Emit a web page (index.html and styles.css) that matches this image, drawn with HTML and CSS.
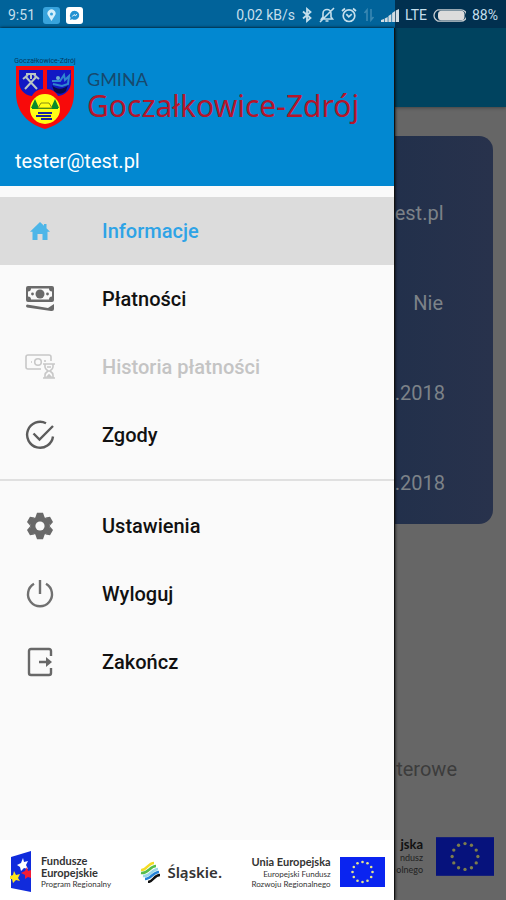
FILE: index.html
```html
<!DOCTYPE html>
<html lang="pl">
<head>
    <meta charset="UTF-8">
    <meta name="viewport" content="width=device-width, initial-scale=1.0">
    <title>Gmina Goczałkowice-Zdrój</title>
    <link rel="stylesheet" href="styles.css">
</head>
<body>
    <svg class="defs" width="0" height="0" aria-hidden="true">
        <symbol id="eu-flag" viewBox="0 0 45 30">
            <rect width="45" height="30" fill="currentColor"/>
            <g class="stars">
                <circle cx="22.5" cy="5" r="1.3"/><circle cx="27.5" cy="6.3" r="1.3"/>
                <circle cx="31.2" cy="10" r="1.3"/><circle cx="32.5" cy="15" r="1.3"/>
                <circle cx="31.2" cy="20" r="1.3"/><circle cx="27.5" cy="23.7" r="1.3"/>
                <circle cx="22.5" cy="25" r="1.3"/><circle cx="17.5" cy="23.7" r="1.3"/>
                <circle cx="13.8" cy="20" r="1.3"/><circle cx="12.5" cy="15" r="1.3"/>
                <circle cx="13.8" cy="10" r="1.3"/><circle cx="17.5" cy="6.3" r="1.3"/>
            </g>
        </symbol>
    </svg>

    <header class="statusbar">
        <div class="status-group">
            <span class="clock">9:51</span>
            <svg width="17" height="17" viewBox="0 0 17 17">
                <rect width="17" height="17" rx="3" fill="#38a3dc"/>
                <path d="M8.5 14 5.4 9A4 4 0 1 1 11.6 9Z" fill="#d5effb"/>
                <circle cx="8.5" cy="7" r="1.5" fill="#38a3dc"/>
            </svg>
            <svg width="17" height="17" viewBox="0 0 17 17">
                <rect width="17" height="17" rx="3" fill="#fff"/>
                <path d="M8.5 3.8a4.7 4.5 0 1 1-2.3 8.4L4 13l.6-2.2A4.6 4.6 0 0 1 8.5 3.8Z" fill="#2492d2"/>
                <path d="M6.3 9.5 8 7.6l1.2 1L11 7.4" fill="none" stroke="#fff"/>
            </svg>
        </div>
        <div class="status-group">
            <span>0,02 kB/s</span>
            <svg width="12" height="16" viewBox="0 0 12 16" fill="none" stroke="#c5dfec" stroke-width="1.8">
                <path d="M2 4.5 9.5 11 6 14V2l3.5 3L2 11.5"/>
            </svg>
            <svg width="16" height="16" viewBox="0 0 16 16" fill="none" stroke="#c5dfec" stroke-width="1.6">
                <path d="M2.5 12h11L12 10V6.5a4 4 0 0 0-8 0V10ZM6.5 14h3M1 15 15 1"/>
            </svg>
            <svg width="16" height="16" viewBox="0 0 16 16" fill="none" stroke="#c5dfec" stroke-width="1.7">
                <circle cx="8" cy="8.7" r="5.8"/>
                <path d="m5.3 7.2 2.5 2.6 3-2.6M1 4l3-2.5M15 4l-3-2.5"/>
            </svg>
            <svg width="12" height="14" viewBox="0 0 12 14" fill="none" stroke="#3a88b3" stroke-width="1.6">
                <path d="M4 13V2L1.500 5M8 1v11l2.500-3"/>
            </svg>
            <svg width="18" height="13" viewBox="0 0 18 13" fill="#d3dde3">
                <path d="M0 13v-2l3-1v3ZM3.700 13V9.500l3-1.500v5ZM7.400 13V7l3-2v8ZM11.100 13V4l3-2v11ZM14.800 13V1.500L18 0v13Z"/>
            </svg>
            <span>LTE</span>
            <svg width="33" height="13" viewBox="0 0 33 13">
                <path d="M5 .8h23a5 5 0 0 1 0 11.400H5Q1 10 1 6.500T5 .8Z" fill="none" stroke="#c9ced2" stroke-width="1.300"/>
                <rect x="5" y="1.800" width="26.500" height="9.400" rx="3.500" fill="#dcdcdc"/>
            </svg>
            <span>88%</span>
        </div>
    </header>

    <div class="screen">
        <aside class="drawer">
            <div class="drawer-header">
                <div class="brand">
                    <div class="crest">
                        <span class="crest-title">Goczałkowice-Zdrój</span>
                        <svg width="60" height="63" viewBox="0 0 60 63">
                            <path d="M1 0h58v27c0 19-12 31-29 36C13 58 1 46 1 27Z" fill="#f80a0a"/>
                            <path d="M4 4h24v19c-5 0-9 3-11 7C9 29 4 23 4 16Z" fill="#1118c4"/>
                            <path d="M32 4h24v12c0 7-5 13-13 14-2-4-6-7-11-7Z" fill="#1118c4"/>
                            <g fill="none" stroke="#b9c6c3" stroke-width="2">
                                <path d="m10 23 12-13M22 23 10 10M11 8h10M16 8v5M8 13l5-4M24 13l-5-4"/>
                            </g>
                            <path d="M37 19c4 5 12 5 16 0l-2 6c-4 4-9 3-12 0Z" fill="#080b4c"/>
                            <path d="M37 15h8l4-6 1 5 4-4-1 8-6 2-9-2" fill="none" stroke="#2f86d0" stroke-width="2"/>
                            <circle cx="43" cy="12" r="2" fill="#6eaed0"/>
                            <circle cx="30" cy="43" r="15" fill="#ffff16"/>
                            <path d="m20 33 4 9h-8ZM40 33l4 9h-8Z" fill="#098a2c"/>
                            <path d="M17 41h26v2H17Z" fill="#098a2c"/>
                            <path d="m23 42 3-5h8l3 5Z" fill="#ffff16" stroke="#8a8d10"/>
                            <path d="M23 46h14v2H23ZM21 49h15v2H21ZM26 52h11v2H26Z" fill="#18209c"/>
                        </svg>
                    </div>
                    <div class="brand-name">
                        <span class="brand-small">GMINA</span>
                        <span class="brand-large">Goczałkowice-Zdrój</span>
                    </div>
                </div>
                <div class="email">tester@test.pl</div>
            </div>

            <nav class="menu">
                <button class="menu-item active">
                    <svg class="icon" viewBox="0 0 30 30" fill="#4db6e8">
                        <path d="m15 6 4 3.800V8h2.500v4.300L25 15.700h-2.500V24h-5v-6h-5v6h-5v-8.300H5Z"/>
                    </svg>
                    <span>Informacje</span>
                </button>
                <button class="menu-item">
                    <svg class="icon" viewBox="0 0 30 30" fill="#6a6a6a">
                        <path fill-rule="evenodd" d="M3 2h24q2 0 2 2v12q0 2-2 2H3q-2 0-2-2V4q0-2 2-2Zm3 2.500a3 3 0 0 1-3 3v5a3 3 0 0 1 3 3h18a3 3 0 0 1 3-3v-5a3 3 0 0 1-3-3Z"/>
                        <circle cx="15" cy="10" r="4.500"/>
                        <circle cx="7.500" cy="10" r="1.400"/>
                        <circle cx="22.500" cy="10" r="1.400"/>
                        <path d="M2 20.500 23 24l6-4v5q0 2.500-3 2L2 23.500Q0 22 2 20.500Z"/>
                    </svg>
                    <span>Płatności</span>
                </button>
                <button class="menu-item" disabled>
                    <svg class="icon" viewBox="0 0 30 30" fill="none" stroke="#c8c8c8" stroke-width="1.600">
                        <path d="M16 17H3q-2 0-2-2V5q0-2 2-2h21q2 0 2 2v4M6 10h1M20 8v2"/>
                        <circle cx="13" cy="10" r="3.300"/>
                        <path d="M18 12h12M18 26h12M20 12v3q0 2 3 4-3 2-3 4v3h8v-3q0-2-3-4 3-2 3-4v-3"/>
                        <path d="m22 25 2-2 2 2ZM22 15h4"/>
                    </svg>
                    <span>Historia płatności</span>
                </button>
                <button class="menu-item">
                    <svg class="icon" viewBox="0 0 30 30" fill="none" stroke="#5c5c5c" stroke-width="2.400">
                        <path d="M21 3.200A13 13 0 1 0 28 16.500M8.500 13.500l6 6L28 6"/>
                    </svg>
                    <span>Zgody</span>
                </button>
                <hr class="divider">
                <button class="menu-item">
                    <svg class="icon" viewBox="-15 -15 30 30">
                        <g fill="#696969">
                            <circle r="10"/>
                            <path id="tooth" d="M-4.500-9-3-13.300h6L4.500-9Z"/>
                            <use href="#tooth" transform="rotate(60)"/>
                            <use href="#tooth" transform="rotate(120)"/>
                            <use href="#tooth" transform="rotate(180)"/>
                            <use href="#tooth" transform="rotate(240)"/>
                            <use href="#tooth" transform="rotate(300)"/>
                        </g>
                        <circle r="4.600" fill="#fafafa"/>
                    </svg>
                    <span>Ustawienia</span>
                </button>
                <button class="menu-item">
                    <svg class="icon" viewBox="0 0 30 30" fill="none" stroke="#707070" stroke-width="2.400">
                        <path d="M15 1v14M9 4.800a12 12 0 1 0 12 0"/>
                    </svg>
                    <span>Wyloguj</span>
                </button>
                <button class="menu-item">
                    <svg class="icon" viewBox="0 0 30 30" fill="none" stroke="#686868" stroke-width="2.400">
                        <path d="M26 9V4q0-2-2-2H6Q4 2 4 4v22q0 2 2 2h18q2 0 2-2v-5M14 15h9"/>
                        <path d="m21 10 6 5-6 5Z" fill="#686868" stroke="none"/>
                    </svg>
                    <span>Zakończ</span>
                </button>
            </nav>

            <footer class="logos">
                <div class="logo">
                    <svg width="22" height="41" viewBox="0 0 22 41">
                        <path d="M1 6 21 0v41L1 37Z" fill="#102bdc"/>
                        <path d="m13 7 1 4 4-1-2 4 2 4-4-1-3 3-1-4-3-2 4-2Z" fill="#fff"/>
                        <path d="m17 16 1 4 3-1v8l-3-1-3 2v-4l-4-2 4-2Z" fill="#f21c35"/>
                        <path d="m4 20 2 4 4-1-2 4 2 3-4-1-3 3-1-4H0v-3l3-1Z" fill="#ffe61d"/>
                    </svg>
                    <div class="funds">
                        <strong>Fundusze</strong>
                        <strong>Europejskie</strong>
                        <small>Program Regionalny</small>
                    </div>
                </div>
                <div class="logo region">
                    <svg width="20" height="22" viewBox="0 0 20 22" fill="none" stroke-width="2.500">
                        <path d="M1 9C6 10 8 2 14 2" stroke="#f4dc24"/>
                        <path d="M1 12C8 13 10 5 16 5" stroke="#55bd4b"/>
                        <path d="M3 15c7 1 9-7 15-7" stroke="#9bd8e8"/>
                        <path d="M5 18c6 0 8-7 14-7" stroke="#2684d9"/>
                        <path d="M8 21c5 0 6-7 12-7" stroke="#111"/>
                    </svg>
                    <span>Śląskie.</span>
                </div>
                <div class="logo union">
                    <div class="union-text">
                        <strong>Unia Europejska</strong>
                        <small>Europejski Fundusz</small>
                        <small>Rozwoju Regionalnego</small>
                    </div>
                    <svg class="flag" width="45" height="30"><use href="#eu-flag"/></svg>
                </div>
            </footer>
        </aside>

        <main class="page">
            <div class="appbar"></div>
            <ul class="card">
                <li>est.pl</li>
                <li>Nie</li>
                <li>.2018</li>
                <li>.2018</li>
            </ul>
            <p class="note">terowe</p>
            <div class="page-logos">
                <div class="page-union">
                    <strong>jska</strong>
                    <small>ndusz</small>
                    <small>olnego</small>
                </div>
                <svg class="flag dimmed" width="58" height="39"><use href="#eu-flag"/></svg>
            </div>
        </main>
    </div>
</body>
</html>
```
FILE: styles.css
```css
* {
    box-sizing: border-box;
}
body {
    margin: 0;
    min-height: 100vh;
    display: flex;
    flex-direction: column;
    font-family: Roboto, sans-serif;
    background-color: #666;
}
svg {
    flex-shrink: 0;
}
.defs {
    position: absolute;
}

/* status bar */
.statusbar {
    display: flex;
    justify-content: space-between;
    align-items: center;
    height: 28px;
    padding: 2px 8px 0;
    font-size: 14px;
    color: #c5dfec;
    background: linear-gradient(to right, #01639a 78%, #01304f 78%);
}
.status-group {
    display: flex;
    align-items: center;
    gap: 6px;
}
.clock {
    margin-right: 2px;
}

.screen {
    flex: 1;
    display: flex;
}

/* drawer */
.drawer {
    width: 78%;
    display: flex;
    flex-direction: column;
    background-color: #fafafa;
    border-right: 1px solid #111;
    box-shadow: 0 0 3px #000;
    z-index: 1;
}
.drawer-header {
    height: 158px;
    padding: 28px 15px 13px;
    display: flex;
    flex-direction: column;
    justify-content: space-between;
    background-color: #0288d1;
}
.brand {
    display: flex;
    gap: 12px;
}
.crest {
    width: 60px;
    display: flex;
    flex-direction: column;
    align-items: center;
}
.crest-title {
    font: 7px/10px Roboto, sans-serif;
    white-space: nowrap;
    color: #053a5e;
}
.brand-name {
    display: flex;
    flex-direction: column;
    padding-top: 12px;
    font-family: "Noto Sans", sans-serif;
    white-space: nowrap;
}
.brand-small {
    font-family: Lato, sans-serif;
    font-size: 18px;
    line-height: 22px;
    color: #17496d;
}
.brand-large {
    font-size: 30px;
    line-height: 32px;
    color: #b5152b;
}
.email {
    font-size: 20px;
    line-height: 24px;
    color: #fff;
}

.menu {
    flex: 1;
    padding-top: 11px;
}
.menu-item {
    display: flex;
    align-items: center;
    gap: 47px;
    width: 100%;
    height: 68px;
    padding: 0 25px;
    border: none;
    background: none;
    font-family: inherit;
    font-size: 20px;
    font-weight: 500;
    color: #111;
    text-align: left;
    cursor: pointer;
}
.menu-item.active {
    background-color: #dcdcdc;
    color: #2ea3e6;
}
.menu-item:disabled {
    color: #c4c4c4;
    cursor: default;
}
.icon {
    width: 30px;
    height: 30px;
}
.divider {
    height: 2px;
    margin: 10px 0 11px;
    border: none;
    background-color: #e0e0e0;
}

/* partner logos */
.logos {
    display: flex;
    justify-content: space-between;
    align-items: center;
    height: 60px;
    padding: 3px 9px 0 10px;
    background-color: #fff;
    color: #333;
    font-family: Lato, sans-serif;
    white-space: nowrap;
}
.logo {
    display: flex;
    align-items: center;
    gap: 9px;
}
.logo strong, .logo small {
    display: block;
}
.funds strong {
    font-size: 11px;
    line-height: 12px;
}
.funds small, .union-text small {
    font-size: 8px;
    line-height: 10px;
}
.region {
    gap: 7px;
    font: 600 15px/24px "Noto Sans", sans-serif;
}
.union-text {
    text-align: right;
}
.union-text strong {
    font-size: 11px;
    line-height: 14px;
}
.flag {
    --star: #e6e68c;
    color: #0a24f0;
}
.flag.dimmed {
    --star: #7d7d4c;
    color: #06127c;
}
.stars {
    fill: var(--star);
}

/* page under the drawer */
.page {
    flex: 1;
    display: flex;
    flex-direction: column;
    overflow: hidden;
    color: #7c8288;
    text-align: right;
}
.appbar {
    height: 79px;
    background-color: #00435f;
    box-shadow: 0 1px 3px #444;
}
.card {
    display: flex;
    flex-direction: column;
    gap: 66px;
    margin: 29px 13px 0 0;
    padding: 65px 50px 29px 0;
    border-radius: 0 14px 14px 0;
    list-style: none;
    font-size: 20px;
    line-height: 24px;
    background: linear-gradient(to right, #22304b, #28324c);
}
.note {
    margin: auto 49px 55px 0;
    font-size: 20px;
    line-height: 24px;
    color: #3c3c3c;
}
.page-logos {
    display: flex;
    justify-content: flex-end;
    align-items: center;
    gap: 13px;
    padding: 0 12px 24px 0;
    color: #111;
}
.page-union {
    font-family: Lato, sans-serif;
}
.page-union strong, .page-union small {
    display: block;
}
.page-union strong {
    font-size: 13px;
    line-height: 16px;
}
.page-union small {
    font-size: 9px;
    line-height: 12px;
    color: #222;
}
```
